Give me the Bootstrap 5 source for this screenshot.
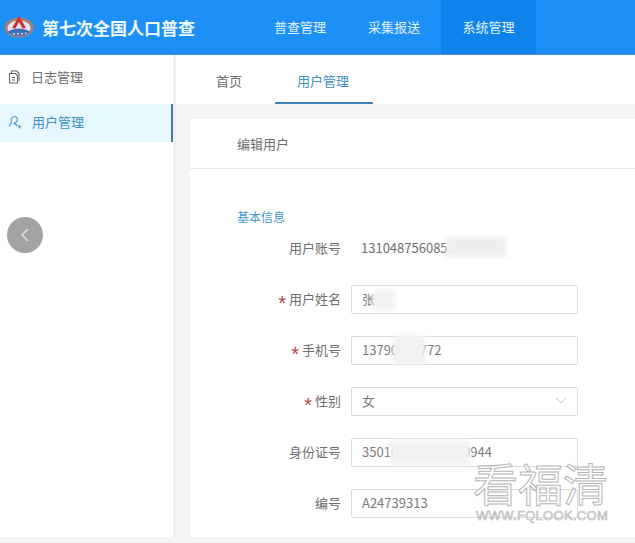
<!DOCTYPE html>
<html lang="zh">
<head>
<meta charset="utf-8">
<title>第七次全国人口普查</title>
<link href="https://cdn.jsdelivr.net/npm/bootstrap@5.3.0/dist/css/bootstrap.min.css" rel="stylesheet">
<style>
html,body{height:543px;overflow:hidden}
body{font-family:"Noto Sans CJK SC","Liberation Sans",sans-serif;font-size:13px;color:#6e6e6e;background:#f3f4f6;position:relative}
.top-bar{height:55px;background:#1d90f7;border-bottom:1px solid #3b8dcb;color:#fff}
.brand-box{width:253px;padding-left:4px;gap:8px}
.brand-name{font-size:17px;font-weight:700;color:#eef8ff;line-height:1}
.top-link{height:54px;width:94px;display:flex;align-items:center;justify-content:center;color:#e4f3ff;font-size:13px;text-decoration:none}
.top-link.top-on{background:#0e83ec;width:95px}
.shell{height:482px}
.side-col{width:176px;flex:none;background:#fff;border-right:3px solid #eef0f3}
.side-row{height:49px;padding:0 0 6px 8px;gap:10px;color:#6e6e6e;display:flex;align-items:center}
.side-row.side-on{height:38px;padding-bottom:2px;background:#e6f7fe;color:#3d93bf;border-right:2px solid #3f7f9f}
.main-col{flex:1;min-width:0}
.tab-strip{height:49px;background:#fff;position:relative}
.tab-item{position:absolute;top:18px;line-height:16px}
.tab-item.tab-on{color:#3d8fc4}
.tab-line{position:absolute;left:99px;width:98px;height:2px;top:47px;background:#3f83b8}
.sheet{margin:15px 0 0 14px;height:418px;background:#fff}
.sheet-head{height:50px;padding-left:47px;border-bottom:1px solid #e9e9e9;display:flex;align-items:center}
.section-name{padding:39px 0 0 47px;color:#3f97cf;font-size:12px;line-height:17px;height:68px}
.form-stack{gap:23px;position:relative}
.form-line{display:flex;align-items:center;height:28px}
.field-name{width:151px;text-align:right;flex:none;margin:0 10px 0 0;line-height:28px;height:28px}
.req{color:#b5474f;margin-right:3px;font-size:20px;line-height:1;vertical-align:-6px;font-family:"Liberation Sans",sans-serif}
.form-plain{padding-left:10px;height:22px;display:flex;align-items:center}
.first-line{height:22px;margin-bottom:3px}
.form-box{width:227px;height:29px;border:1px solid #dcdcdc;border-radius:2px;padding:0 10px;display:flex;align-items:center;justify-content:space-between;position:relative;color:#7a7a7a}
.mask{position:absolute;background:#f1f1f1;filter:blur(2px)}
.mask-plain{left:446px;top:237px;width:60px;height:20px;background:#eeeeee}
.back-btn{position:absolute;left:7px;top:217px;width:36px;height:36px;border-radius:50%;background:#a3a3a3;display:flex;align-items:center;justify-content:center}
.wm-main{position:absolute;left:473px;top:460px;font-size:45px;line-height:46px;color:rgba(255,255,255,.9);-webkit-text-stroke:1px #b5b5b5;white-space:nowrap}
.wm-sub{position:absolute;left:476px;top:508px;font-size:13px;line-height:16px;letter-spacing:.3px;color:rgba(255,255,255,.9);-webkit-text-stroke:.6px #aaa;font-family:"Liberation Sans",sans-serif;white-space:nowrap}
</style>
</head>
<body>
<header class="top-bar d-flex">
  <div class="brand-box d-flex align-items-center">
    <svg width="30" height="24" viewBox="0 0 30 24" aria-hidden="true">
      <ellipse cx="15" cy="12.500" rx="14.500" ry="10" fill="#a67f70"/>
      <ellipse cx="15" cy="13" rx="11.500" ry="7.500" fill="#dfe6f0"/>
      <path d="M3.500 17 Q15 25 26.500 17 L23 15 Q15 12 7 15Z" fill="#3f6db5"/>
      <path d="M15 1 L8 13 L11.500 13.500 L15 7 L18.500 13.500 L22 13Z" fill="#cf3030"/>
      <path d="M9 18h2v1.500H9zM13 18h2v1.500h-2zM17 18h2v1.500h-2zM21 17.500h1.500V19H21z" fill="#cfe0f5"/>
    </svg>
    <span class="brand-name">第七次全国人口普查</span>
  </div>
  <a class="top-link" href="#">普查管理</a>
  <a class="top-link" href="#">采集报送</a>
  <a class="top-link top-on" href="#">系统管理</a>
</header>
<div class="shell d-flex">
  <aside class="side-col">
    <div class="side-row">
      <svg width="13" height="14" viewBox="0 0 13 14" fill="none" stroke="#666" stroke-width="1.100" aria-hidden="true"><path d="M3.500 3V1h5l2.500 2.500V11"/><path d="M1.500 3.500h6l2 2V13h-8z"/><path d="M4 7.500h3M4 10h3"/></svg>
      <span>日志管理</span>
    </div>
    <div class="side-row side-on">
      <svg width="14" height="14" viewBox="0 0 14 14" fill="none" stroke="#4a9cc5" stroke-width="1.100" aria-hidden="true"><path d="M4 6.500A3 3 0 1 1 8.500 6.800L5.500 9.500"/><path d="M1 11.500L4 6.500M6 7.500l3.500 3.500"/><path d="M11.500 10v3.500M9.800 11.800h3.400"/></svg>
      <span>用户管理</span>
    </div>
  </aside>
  <main class="main-col">
    <div class="tab-strip">
      <span class="tab-item" style="left:40px">首页</span>
      <span class="tab-item tab-on" style="left:121px">用户管理</span>
      <span class="tab-line"></span>
    </div>
    <section class="sheet">
      <div class="sheet-head">编辑用户</div>
      <div class="section-name">基本信息</div>
      <div class="form-stack d-flex flex-column">
        <div class="form-line first-line">
          <label class="field-name">用户账号</label>
          <div class="form-plain">1310487560851</div>
        </div>
        <div class="form-line">
          <label class="field-name"><span class="req">*</span>用户姓名</label>
          <div class="form-box"><span>张</span><i class="mask" style="left:21px;top:4px;width:21px;height:20px"></i></div>
        </div>
        <div class="form-line">
          <label class="field-name"><span class="req">*</span>手机号</label>
          <div class="form-box"><span>13790000772</span><i class="mask" style="left:41px;top:-2px;width:32px;height:30px"></i></div>
        </div>
        <div class="form-line">
          <label class="field-name"><span class="req">*</span>性别</label>
          <div class="form-box"><span>女</span>
            <svg width="12" height="8" viewBox="0 0 12 8" fill="none" stroke="#c9c9c9" stroke-width="1" aria-hidden="true"><path d="M1 1l5 5 5-5"/></svg>
          </div>
        </div>
        <div class="form-line">
          <label class="field-name">身份证号</label>
          <div class="form-box"><span>350100000000000944</span><i class="mask" style="left:38px;top:2px;width:80px;height:24px"></i></div>
        </div>
        <div class="form-line">
          <label class="field-name">编号</label>
          <div class="form-box"><span>A24739313</span></div>
        </div>
      </div>
    </section>
  </main>
</div>
<i class="mask mask-plain"></i>
<div class="back-btn">
  <svg width="10" height="16" viewBox="0 0 10 16" fill="none" stroke="#e8e8e8" stroke-width="1.200" aria-hidden="true"><path d="M8 2L2 8l6 6"/></svg>
</div>
<div class="wm-main">看福清</div>
<div class="wm-sub">WWW.FQLOOK.COM</div>
</body>
</html>
